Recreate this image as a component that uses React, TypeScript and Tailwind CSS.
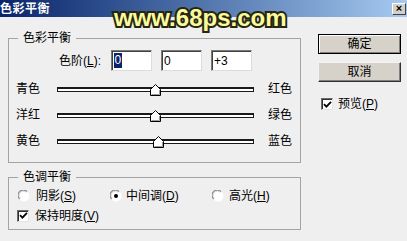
import React from "react";

const FONT = "font-['Liberation_Sans','Noto_Sans_CJK_SC',sans-serif]";

function Thumb({ value }: { value: number }) {
  // track inner starts at x=58 (page), center for value 0 at 155.5
  const center = 97.5 + (value * 197) / 200;
  return (
    <svg
      width="11"
      height="12"
      viewBox="0 0 11 12"
      className="absolute top-[-5px]"
      style={{ left: center - 5.5 }}
    >
      <polygon points="0.5,5.5 5.5,0.5 10.5,5.5 10.5,11.5 0.5,11.5" fill="#fff" stroke="#000" />
      <polyline points="9.5,6 9.5,10.5 1.5,10.5" fill="none" stroke="#9a9a9a" />
    </svg>
  );
}

function SliderRow({ left, right, value }: { left: string; right: string; value: number }) {
  return (
    <div className="flex items-center h-[26px] pl-[7px]">
      <span className="w-[41px] leading-[12px]">{left}</span>
      <div className="relative w-[197px] h-[5px] border border-[#1a1a1a] border-t-2 bg-white">
        <Thumb value={value} />
      </div>
      <span className="ml-[14px] leading-[12px]">{right}</span>
    </div>
  );
}

function Radio({ checked }: { checked?: boolean }) {
  return (
    <svg width="12" height="12" viewBox="0 0 12 12" className="shrink-0">
      <circle cx="6" cy="6" r="5.5" fill="#fff" />
      <path d="M1.6 9 A5 5 0 0 1 9 1.6" fill="none" stroke="#8a8a8a" strokeWidth="1.2" />
      <path d="M2.4 8.3 A4 4 0 0 1 8.3 2.4" fill="none" stroke="#d6d6d6" strokeWidth="1" />
      {checked && <circle cx="6" cy="6" r="2" fill="#000" />}
    </svg>
  );
}

function Check() {
  return (
    <span className="w-[12px] h-[12px] shrink-0 bg-white border border-t-[#6a6a6a] border-l-[#6a6a6a] border-r-[#e4e4e4] border-b-[#e4e4e4] shadow-[inset_1px_1px_#303030] flex items-center justify-center">
      <svg width="9" height="9" viewBox="0 0 9 9">
        <path d="M1 4.2 L3.4 6.6 L8 1.8" fill="none" stroke="#000" strokeWidth="1.8" />
      </svg>
    </span>
  );
}

function Field({ children }: { children: React.ReactNode }) {
  return (
    <div className="w-[41px] h-[21px] bg-white border border-t-[#7a7a7a] border-l-[#7a7a7a] border-r-[#dcdcdc] border-b-[#dcdcdc] shadow-[inset_1px_1px_#404040] flex items-center pl-[2px] text-[12px]">
      {children}
    </div>
  );
}

export default function App() {
  return (
    <div className={`relative w-[407px] h-[241px] overflow-hidden bg-[#efefef] text-[12px] text-black ${FONT}`}>
      {/* title bar */}
      <div className="h-[17px] flex items-center justify-between bg-gradient-to-r from-[#0a246a] to-[#a6caf0]">
        <span className="text-white font-bold text-[12px] tracking-[0.5px] leading-[12px]">色彩平衡</span>
        <span className="mr-[1px] w-[14px] h-[12px] bg-[#d4d0c8] border border-t-white border-l-white border-r-[#404040] border-b-[#404040] flex items-center justify-center text-[11px] font-bold leading-none">
          ×
        </span>
      </div>

      <div className="flex">
        {/* left column */}
        <div className="pl-[8px]">
          <fieldset className="mt-[15px] w-[293px] border border-[#a4a4a4]">
            <legend className="ml-[9px] px-[5px] leading-[12px]">色彩平衡</legend>
            <div className="flex items-center mt-[6px] h-[21px]">
              <span className="w-[92px] text-right">
                色阶(<span className="underline">L</span>):
              </span>
              <div className="ml-[10px]">
                <Field>
                  <span className="bg-[#0a246a] text-white leading-[15px] px-[0.5px]">0</span>
                </Field>
              </div>
              <div className="ml-[9px]">
                <Field>0</Field>
              </div>
              <div className="ml-[9px]">
                <Field>+3</Field>
              </div>
            </div>
            <div className="mt-[5px] pb-[8px]">
              <SliderRow left="青色" right="红色" value={0} />
              <SliderRow left="洋红" right="绿色" value={0} />
              <SliderRow left="黄色" right="蓝色" value={3} />
            </div>
          </fieldset>

          <fieldset className="mt-[8px] w-[293px] border border-[#a4a4a4]">
            <legend className="ml-[9px] px-[5px] leading-[12px]">色调平衡</legend>
            <div className="flex items-center mt-[6px] h-[14px] pl-[9px]">
              <div className="w-[92px] flex items-center gap-[6px]">
                <Radio />
                <span>
                  阴影(<span className="underline">S</span>)
                </span>
              </div>
              <div className="w-[102px] flex items-center gap-[4px]">
                <Radio checked />
                <span>
                  中间调(<span className="underline">D</span>)
                </span>
              </div>
              <div className="flex items-center gap-[5px]">
                <Radio />
                <span>
                  高光(<span className="underline">H</span>)
                </span>
              </div>
            </div>
            <div className="flex items-center mt-[6px] h-[13px] pl-[8px] gap-[6px] mb-[7px]">
              <Check />
              <span>
                保持明度(<span className="underline">V</span>)
              </span>
            </div>
          </fieldset>
        </div>

        {/* right column */}
        <div className="ml-[17px] pt-[17px] flex flex-col">
          <button className="w-[83px] h-[20px] bg-[#d6d2ca] border border-black shadow-[inset_1px_1px_#fff,inset_-1px_-1px_#808080] leading-none">
            确定
          </button>
          <button className="mt-[8px] w-[83px] h-[20px] bg-[#d6d2ca] border border-t-[#f4f4f4] border-l-[#f4f4f4] border-r-[#303030] border-b-[#303030] shadow-[inset_-1px_-1px_#808080] leading-none">
            取消
          </button>
          <div className="mt-[16px] ml-[3px] flex items-center gap-[5px] h-[12px]">
            <Check />
            <span>
              预览(<span className="underline">P</span>)
            </span>
          </div>
        </div>
      </div>

      {/* watermark */}
      <div className="absolute left-[114px] top-[6px] font-['Liberation_Sans',sans-serif] font-bold text-[24px] leading-none text-[#fbfb9e] [-webkit-text-stroke:4px_#262612] [paint-order:stroke_fill]">
        www.68ps.com
      </div>
    </div>
  );
}
